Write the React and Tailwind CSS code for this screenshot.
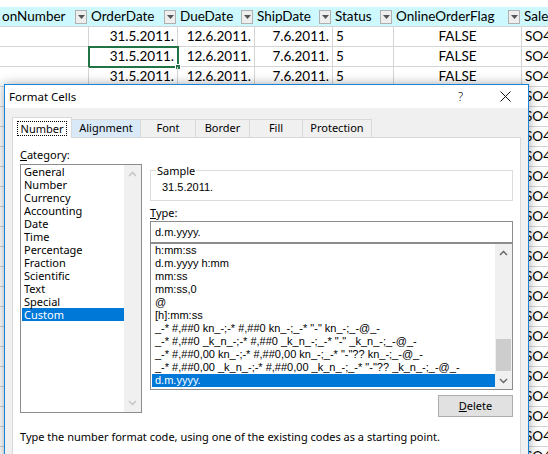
import React from "react";

const cols = [
  { h: "onNumber", v: "", a: "text-left" },
  { h: "OrderDate", v: "31.5.2011.", a: "text-right" },
  { h: "DueDate", v: "12.6.2011.", a: "text-right" },
  { h: "ShipDate", v: "7.6.2011.", a: "text-right" },
  { h: "Status", v: "5", a: "text-left" },
  { h: "OnlineOrderFlag", v: "FALSE", a: "text-center" },
  { h: "Sale", v: "SO4", a: "text-left", nobtn: true },
];

function DropBtn() {
  return (
    <div className="mr-[2px] flex h-[14px] w-[12px] shrink-0 items-center justify-center border border-[#b0b0b0] bg-[#eeeeee]">
      <svg width="7" height="4" viewBox="0 0 7 4">
        <path d="M0 0 L7 0 L3.5 4 Z" fill="#555" />
      </svg>
    </div>
  );
}

function Sheet() {
  const rows = Array.from({ length: 22 });
  return (
    <div className="font-[Lato,sans-serif] text-[13.5px] text-black">
      <div className="h-[7px]" />
      <div className="grid h-[20px] grid-cols-[89px_89px_77px_78px_61px_128px_80px] border-b border-[#d4d4d4] bg-[#cdf8fd]">
        {cols.map((c, i) => (
          <div key={i} className="flex items-center overflow-hidden whitespace-nowrap pl-[2px]">
            <span className="flex-1 leading-[19px]">{c.h}</span>
            {!c.nobtn && <DropBtn />}
          </div>
        ))}
      </div>
      {rows.map((_, r) => (
        <div key={r} className="relative grid h-[20px] grid-cols-[89px_89px_77px_78px_61px_128px_80px]">
          {cols.map((c, i) => (
            <div
              key={i}
              className={`overflow-hidden whitespace-nowrap border-b border-r border-[#d4d4d4] px-[3px] leading-[19px] ${c.a}`}
            >
              {r < 3 || i === cols.length - 1 ? c.v : ""}
            </div>
          ))}
          {r === 1 && (
            <>
              <div className="absolute left-[88px] top-[-1px] h-[22px] w-[91px] border-2 border-[#217346]" />
              <div className="absolute left-[175px] top-[17px] h-[6px] w-[6px] border border-white bg-[#217346]" />
            </>
          )}
        </div>
      ))}
    </div>
  );
}

function Chevron({ up, color }) {
  return (
    <svg width="9" height="6" viewBox="0 0 9 6">
      <path
        d={up ? "M1 5 L4.5 1.5 L8 5" : "M1 1 L4.5 4.5 L8 1"}
        fill="none"
        stroke={color}
        strokeWidth="1.3"
      />
    </svg>
  );
}

const categories = [
  "General",
  "Number",
  "Currency",
  "Accounting",
  "Date",
  "Time",
  "Percentage",
  "Fraction",
  "Scientific",
  "Text",
  "Special",
  "Custom",
];

const formats = [
  "h:mm:ss",
  "d.m.yyyy h:mm",
  "mm:ss",
  "mm:ss,0",
  "@",
  "[h]:mm:ss",
  '_-* #,##0 kn_-;-* #,##0 kn_-;_-* "-" kn_-;_-@_-',
  '_-* #,##0 _k_n_-;-* #,##0 _k_n_-;_-* "-" _k_n_-;_-@_-',
  '_-* #,##0,00 kn_-;-* #,##0,00 kn_-;_-* "-"?? kn_-;_-@_-',
  '_-* #,##0,00 _k_n_-;-* #,##0,00 _k_n_-;_-* "-"?? _k_n_-;_-@_-',
  "d.m.yyyy.",
];

const tabs = [
  { t: "Alignment", w: "w-[70px]", bg: "bg-[#d9e9f7]" },
  { t: "Font", w: "w-[56px]", bg: "bg-[#f0f0f0]" },
  { t: "Border", w: "w-[55px]", bg: "bg-[#f0f0f0]" },
  { t: "Fill", w: "w-[54px]", bg: "bg-[#f0f0f0]" },
  { t: "Protection", w: "w-[70px]", bg: "bg-[#f0f0f0]" },
];

function Dialog() {
  return (
    <div className="absolute left-[4px] top-[84px] h-[400px] w-[525px] border border-[#1883d7] bg-[#f0f0f0] font-['Noto_Sans',sans-serif] text-[11px] text-black shadow-[0_0_10px_rgba(0,0,0,0.35)]">
      {/* title bar */}
      <div className="flex h-[23px] items-center bg-white">
        <span className="pl-[4px] text-[11.5px]">Format Cells</span>
        <div className="ml-auto flex h-full">
          <div className="flex w-[45px] items-center justify-center text-[12px] font-light">?</div>
          <div className="flex w-[45px] items-center justify-center">
            <svg width="11" height="11" viewBox="0 0 11 11">
              <path d="M0.5 0.5 L10.5 10.5 M10.5 0.5 L0.5 10.5" stroke="#111" strokeWidth="1" />
            </svg>
          </div>
        </div>
      </div>

      <div className="px-[7px] pt-[9px]">
        {/* tabs */}
        <div className="flex h-[20px] items-start">
          <div className="relative z-10 flex h-[21px] w-[60px] items-start justify-center border-x border-t border-[#d9d9d9] bg-white pt-[3px]">
            <span className="h-[15px] border border-dotted border-black px-[3px] leading-[13px]">Number</span>
          </div>
          {tabs.map((t) => (
            <div
              key={t.t}
              className={`-ml-px mt-[2px] flex h-[18px] items-center justify-center border-x border-t border-[#d9d9d9] ${t.w} ${t.bg}`}
            >
              {t.t}
            </div>
          ))}
        </div>

        {/* panel */}
        <div className="h-[330px] border border-[#d9d9d9] bg-white px-[7px]">
          <div className="flex gap-[8px]">
            {/* left column */}
            <div className="w-[122px]">
              <div className="mt-[9px] leading-[16px]">
                <span className="underline">C</span>ategory:
              </div>
              <div className="mt-[1px] flex h-[249px] border border-[#8c8c8c]">
                <div className="flex-1 pl-[1px]">
                  {categories.map((c) => (
                    <div
                      key={c}
                      className={`h-[13px] pl-[2px] leading-[13px] ${c === "Custom" ? "bg-[#0078d7] text-white" : ""}`}
                    >
                      {c}
                    </div>
                  ))}
                </div>
                <div className="flex w-[17px] flex-col items-center justify-between bg-[#f0f0f0] py-[6px]">
                  <Chevron up color="#c2c2c2" />
                  <Chevron color="#c2c2c2" />
                </div>
              </div>
            </div>

            {/* right column */}
            <div className="w-[363px]">
              <div className="relative mt-[32px] h-[31px] border border-[#dcdcdc]">
                <span className="absolute left-[5px] top-[-8px] bg-white px-[1px] leading-[15px]">
                  Sample
                </span>
                <div className="pl-[11px] pt-[9px] font-['Liberation_Sans',sans-serif] leading-[15px]">
                  31.5.2011.
                </div>
              </div>
              <div className="mt-[4px] leading-[16px]">
                <span className="underline">T</span>ype:
              </div>
              <div className="flex h-[22px] items-center border border-[#8c8c8c] pl-[4px] font-['Liberation_Sans',sans-serif]">
                d.m.yyyy.
              </div>
              <div className="flex h-[147px] border border-[#8c8c8c] font-['Liberation_Sans',sans-serif]">
                <div className="min-w-0 flex-1 overflow-hidden pl-[1px]">
                  {formats.map((f, i) => (
                    <div
                      key={i}
                      className={`h-[13px] whitespace-pre pl-[3px] leading-[13px] ${i === formats.length - 1 ? "bg-[#0078d7] text-white" : ""}`}
                    >
                      {f}
                    </div>
                  ))}
                </div>
                <div className="flex w-[17px] flex-col bg-[#f0f0f0]">
                  <div className="flex h-[17px] items-center justify-center">
                    <Chevron up color="#606060" />
                  </div>
                  <div className="flex flex-1 flex-col justify-end px-[1px] pb-[1px]">
                    <div className="h-[32px] bg-[#cdcdcd]" />
                  </div>
                  <div className="flex h-[17px] items-center justify-center">
                    <Chevron color="#606060" />
                  </div>
                </div>
              </div>
              <div className="mt-[5px] flex justify-end">
                <div className="flex h-[22px] w-[75px] items-center justify-center border border-[#adadad] bg-[#e1e1e1]">
                  <span>
                    <span className="underline">D</span>elete
                  </span>
                </div>
              </div>
            </div>
          </div>
          <div className="mt-[12px] leading-[15px]">
            Type the number format code, using one of the existing codes as a starting point.
          </div>
        </div>
      </div>
    </div>
  );
}

export default function App() {
  return (
    <div className="relative h-[454px] w-[548px] overflow-hidden bg-white">
      <Sheet />
      <Dialog />
    </div>
  );
}
